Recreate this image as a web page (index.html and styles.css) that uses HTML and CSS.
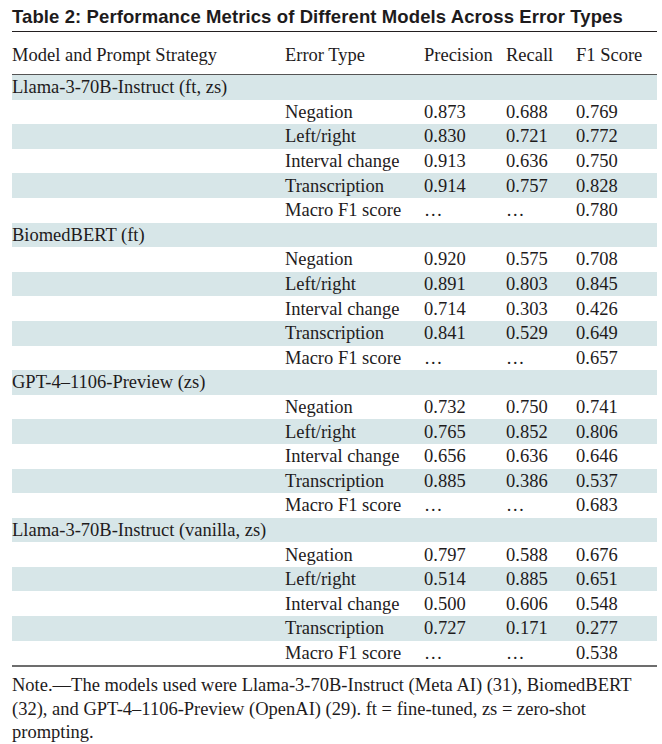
FILE: index.html
```html
<!DOCTYPE html>
<html>
<head>
<meta charset="utf-8">
<link rel="stylesheet" href="styles.css">
</head>
<body>
<div class="page">
  <h1 class="title">Table 2: Performance Metrics of Different Models Across Error Types</h1>
  <table class="metrics">
    <colgroup>
      <col class="c1"><col class="c2"><col class="c3"><col class="c4"><col class="c5">
    </colgroup>
    <thead>
      <tr><th>Model and Prompt Strategy</th><th>Error Type</th><th>Precision</th><th>Recall</th><th>F1 Score</th></tr>
    </thead>
    <tbody>
      <tr class="group"><td colspan="5">Llama-3-70B-Instruct (ft, zs)</td></tr>
      <tr><td></td><td>Negation</td><td>0.873</td><td>0.688</td><td>0.769</td></tr>
      <tr><td></td><td>Left/right</td><td>0.830</td><td>0.721</td><td>0.772</td></tr>
      <tr><td></td><td>Interval change</td><td>0.913</td><td>0.636</td><td>0.750</td></tr>
      <tr><td></td><td>Transcription</td><td>0.914</td><td>0.757</td><td>0.828</td></tr>
      <tr><td></td><td>Macro F1 score</td><td>…</td><td>…</td><td>0.780</td></tr>
      <tr class="group"><td colspan="5">BiomedBERT (ft)</td></tr>
      <tr><td></td><td>Negation</td><td>0.920</td><td>0.575</td><td>0.708</td></tr>
      <tr><td></td><td>Left/right</td><td>0.891</td><td>0.803</td><td>0.845</td></tr>
      <tr><td></td><td>Interval change</td><td>0.714</td><td>0.303</td><td>0.426</td></tr>
      <tr><td></td><td>Transcription</td><td>0.841</td><td>0.529</td><td>0.649</td></tr>
      <tr><td></td><td>Macro F1 score</td><td>…</td><td>…</td><td>0.657</td></tr>
      <tr class="group"><td colspan="5">GPT-4–1106-Preview (zs)</td></tr>
      <tr><td></td><td>Negation</td><td>0.732</td><td>0.750</td><td>0.741</td></tr>
      <tr><td></td><td>Left/right</td><td>0.765</td><td>0.852</td><td>0.806</td></tr>
      <tr><td></td><td>Interval change</td><td>0.656</td><td>0.636</td><td>0.646</td></tr>
      <tr><td></td><td>Transcription</td><td>0.885</td><td>0.386</td><td>0.537</td></tr>
      <tr><td></td><td>Macro F1 score</td><td>…</td><td>…</td><td>0.683</td></tr>
      <tr class="group"><td colspan="5">Llama-3-70B-Instruct (vanilla, zs)</td></tr>
      <tr><td></td><td>Negation</td><td>0.797</td><td>0.588</td><td>0.676</td></tr>
      <tr><td></td><td>Left/right</td><td>0.514</td><td>0.885</td><td>0.651</td></tr>
      <tr><td></td><td>Interval change</td><td>0.500</td><td>0.606</td><td>0.548</td></tr>
      <tr><td></td><td>Transcription</td><td>0.727</td><td>0.171</td><td>0.277</td></tr>
      <tr><td></td><td>Macro F1 score</td><td>…</td><td>…</td><td>0.538</td></tr>
    </tbody>
  </table>
  <p class="note">Note.—The models used were Llama-3-70B-Instruct (Meta AI) (31), BiomedBERT (32), and GPT-4–1106-Preview (OpenAI) (29). ft = fine-tuned, zs = zero-shot<br>prompting.</p>
</div>
</body>
</html>
```

FILE: styles.css
```css
html, body {
  margin: 0;
  padding: 0;
  background: #ffffff;
}
.page {
  width: 645px;
  padding: 0 0 0 12px;
  font-family: "Liberation Serif", "Times New Roman", serif;
  color: #1e1b1c;
}
.title {
  margin: 0;
  padding-top: 7px;
  height: 24px;
  font-family: "Liberation Sans", Arial, sans-serif;
  font-weight: bold;
  font-size: 18.5px;
  line-height: 20px;
  letter-spacing: 0.1px;
  color: #1e1b1c;
  border-bottom: 1.5px solid #231f20;
  box-sizing: content-box;
}
.metrics {
  width: 645px;
  border-collapse: collapse;
  table-layout: fixed;
  font-size: 18.5px;
}
.c1 { width: 273px; }
.c2 { width: 139px; }
.c3 { width: 82px; }
.c4 { width: 70px; }
.c5 { width: 81px; }
.metrics th {
  font-weight: normal;
  text-align: left;
  height: 38px;
  padding: 0;
  padding-top: 4px;
  vertical-align: middle;
  border-bottom: 1.5px solid #555;
}
.metrics td {
  height: 24.6px;
  padding: 0;
  line-height: 20px;
  vertical-align: middle;
  white-space: nowrap;
}
.metrics tbody tr:nth-child(odd) {
  background: #d7e6e8;
}
.metrics tbody tr:last-child td {
  border-bottom: 2px solid #6d6d6d;
}
.note {
  margin: 7px 0 0 0;
  width: 630px;
  font-size: 18.5px;
  line-height: 23.5px;
}
```
